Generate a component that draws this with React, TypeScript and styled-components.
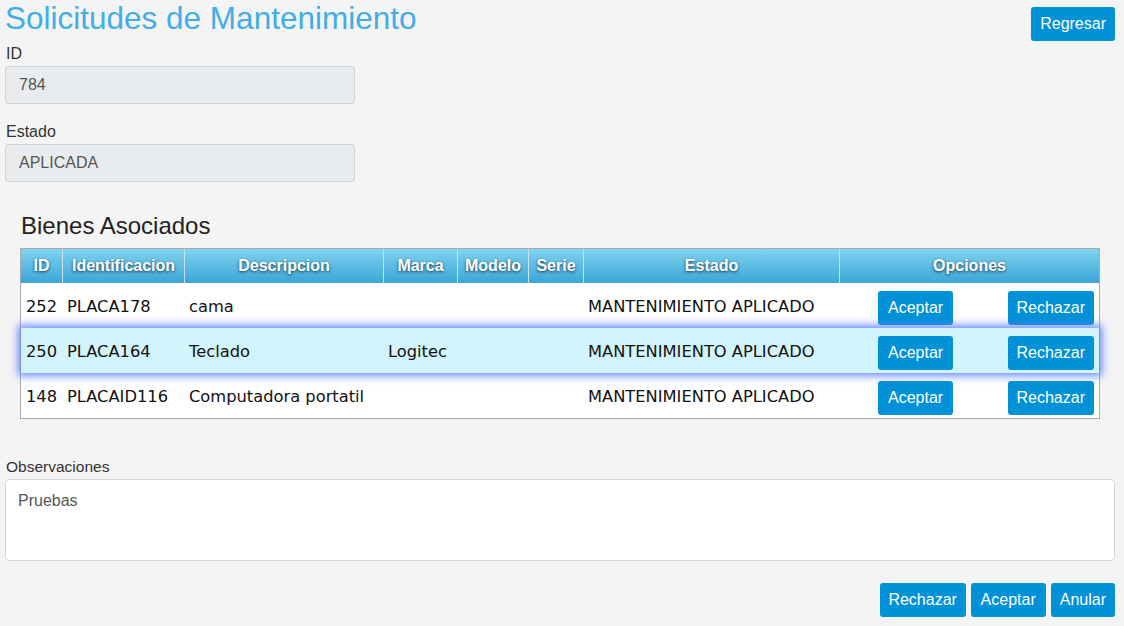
import styled, { createGlobalStyle } from "styled-components";

const GlobalStyle = createGlobalStyle`
  html, body {
    margin: 0;
    padding: 0;
    background-color: #f4f4f4;
  }

  * {
    box-sizing: border-box;
  }
`;

const Page = styled.div`
  min-height: 626px;
  padding: 0 9px 0 5px;
  font-family: "Liberation Sans", Arial, sans-serif;
  color: #333;
`;

const Header = styled.div`
  display: flex;
  justify-content: space-between;
  align-items: flex-start;
`;

const Title = styled.h1`
  margin: 0;
  font-size: 31.5px;
  line-height: 36px;
  font-weight: 400;
  color: #42ade6;
`;

const Button = styled.button<{ $top?: number; $pad?: number }>`
  margin-top: ${(p) => p.$top ?? 0}px;
  height: 34px;
  padding: 0 ${(p) => p.$pad ?? 9}px;
  border: 0;
  border-radius: 3px;
  background-color: #0091d6;
  color: white;
  font-family: "Liberation Sans", Arial, sans-serif;
  font-size: 16px;
  cursor: pointer;

  &:hover {
    background-color: #0083c2;
  }
`;

const Field = styled.div<{ $top: number }>`
  display: flex;
  flex-direction: column;
  margin-top: ${(p) => p.$top}px;
`;

const Label = styled.label<{ $size?: number }>`
  font-size: ${(p) => p.$size ?? 16}px;
  line-height: 18px;
  color: #333;
  margin-bottom: 3px;
  margin-left: 1px;
`;

const Input = styled.input`
  width: 350px;
  height: 38px;
  padding: 0 13px;
  border: 1px solid #d2d4d6;
  border-radius: 4px;
  background-color: #e9ecef;
  color: #555;
  font-family: "Liberation Sans", Arial, sans-serif;
  font-size: 16px;

  &:focus {
    outline: none;
  }
`;

const Section = styled.div`
  margin: 31px 15px 0 15px;
`;

const SectionTitle = styled.h2`
  margin: 0 0 9px 1px;
  font-size: 24px;
  line-height: 26px;
  font-weight: 400;
  color: #222;
`;

const Table = styled.div`
  border: 1px solid #aaa;
  background-color: white;
`;

const columns = "41px 122px 199px 74px 71px 55px 256px 1fr";

const HeadRow = styled.div`
  display: grid;
  grid-template-columns: ${columns};
  height: 34px;
  background: linear-gradient(#80d3ee, #3aa5d8);
`;

const HeadCell = styled.div`
  display: flex;
  align-items: center;
  justify-content: center;
  color: white;
  font-weight: 700;
  font-size: 16px;
  text-shadow: 0 1px 3px rgba(0, 0, 0, 0.7);

  & + & {
    border-left: 1px solid #c9e2ea;
  }
`;

const Row = styled.div<{ $active?: boolean }>`
  display: grid;
  grid-template-columns: ${columns};
  height: 45px;
  position: relative;
  background-color: ${(p) => (p.$active ? "#d2f5fd" : "white")};
  box-shadow: ${(p) =>
    p.$active ? "0 0 8px 3px rgba(92, 128, 255, 0.9)" : "none"};
  z-index: ${(p) => (p.$active ? 1 : 0)};
`;

const Cell = styled.div`
  display: flex;
  align-items: center;
  padding: 1px 5px 0 5px;
  font-family: "DejaVu Sans", Verdana, sans-serif;
  font-size: 16.3px;
  color: #111;
  white-space: nowrap;
`;

const Options = styled.div`
  display: flex;
  align-items: center;
  justify-content: space-between;
  padding: 5px 5px 0 39px;
`;

const TextArea = styled.textarea`
  width: 100%;
  height: 82px;
  padding: 12px 12px;
  border: 1px solid #d2d4d6;
  border-radius: 4px;
  background-color: white;
  color: #555;
  font-family: "Liberation Sans", Arial, sans-serif;
  font-size: 16px;
  resize: none;

  &:focus {
    outline: none;
  }
`;

const Footer = styled.div`
  display: flex;
  justify-content: flex-end;
  gap: 5px;
  margin-top: 22px;
`;

const bienes = [
  {
    id: 252,
    identificacion: "PLACA178",
    descripcion: "cama",
    marca: "",
    modelo: "",
    serie: "",
    estado: "MANTENIMIENTO APLICADO",
  },
  {
    id: 250,
    identificacion: "PLACA164",
    descripcion: "Teclado",
    marca: "Logitec",
    modelo: "",
    serie: "",
    estado: "MANTENIMIENTO APLICADO",
  },
  {
    id: 148,
    identificacion: "PLACAID116",
    descripcion: "Computadora portatil",
    marca: "",
    modelo: "",
    serie: "",
    estado: "MANTENIMIENTO APLICADO",
  },
];

const headers = [
  "ID",
  "Identificacion",
  "Descripcion",
  "Marca",
  "Modelo",
  "Serie",
  "Estado",
  "Opciones",
];

export default function App() {
  return (
    <>
      <GlobalStyle />
      <Page>
        <Header>
          <Title>Solicitudes de Mantenimiento</Title>
          <Button $top={7}>Regresar</Button>
        </Header>

        <Field $top={4}>
          <Label>ID</Label>
          <Input readOnly value="784" />
        </Field>
        <Field $top={19}>
          <Label>Estado</Label>
          <Input readOnly value="APLICADA" />
        </Field>

        <Section>
          <SectionTitle>Bienes Asociados</SectionTitle>
          <Table>
            <HeadRow>
              {headers.map((h) => (
                <HeadCell key={h}>{h}</HeadCell>
              ))}
            </HeadRow>
            {bienes.map((b) => (
              <Row key={b.id} $active={b.id === 250}>
                <Cell>{b.id}</Cell>
                <Cell>{b.identificacion}</Cell>
                <Cell>{b.descripcion}</Cell>
                <Cell>{b.marca}</Cell>
                <Cell>{b.modelo}</Cell>
                <Cell>{b.serie}</Cell>
                <Cell>{b.estado}</Cell>
                <Options>
                  <Button $pad={10}>Aceptar</Button>
                  <Button>Rechazar</Button>
                </Options>
              </Row>
            ))}
          </Table>
        </Section>

        <Field $top={39}>
          <Label $size={15.5}>Observaciones</Label>
          <TextArea readOnly value="Pruebas" />
        </Field>

        <Footer>
          <Button $pad={8.75}>Rechazar</Button>
          <Button $pad={10}>Aceptar</Button>
          <Button $pad={9}>Anular</Button>
        </Footer>
      </Page>
    </>
  );
}
